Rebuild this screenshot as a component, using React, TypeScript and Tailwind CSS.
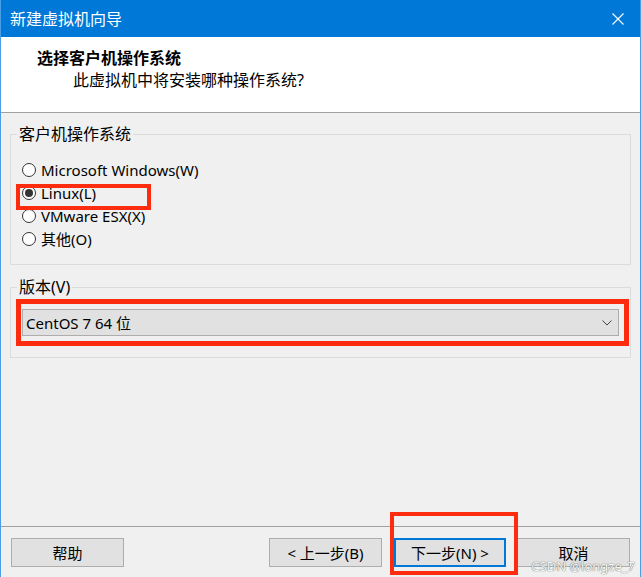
import React from 'react';

const font = "font-['Noto_Sans','Noto_Sans_CJK_SC',sans-serif]";

const Radio: React.FC<{ label: string; checked?: boolean }> = ({ label, checked }) => (
  <div className="flex items-center h-[23px]">
    <div className="shrink-0 flex items-center justify-center w-[14px] h-[14px] rounded-full border border-[#333333] bg-white">
      {checked && <div className="w-[8px] h-[8px] rounded-full bg-[#333333]" />}
    </div>
    <span className="ml-[5px] text-[15px] leading-[20px] text-black">{label}</span>
  </div>
);

const Button: React.FC<{ label: string; primary?: boolean; className?: string }> = ({ label, primary, className }) => (
  <div
    className={
      'flex items-center justify-center h-[29px] bg-[#e1e1e1] text-[15px] leading-[18px] text-black ' +
      (primary ? 'border-2 border-[#0078d7] ' : 'border border-[#adadad] ') +
      (className ?? '')
    }
  >
    {label}
  </div>
);

export default function App() {
  return (
    <div className={`relative w-[641px] h-[577px] flex flex-col bg-[#f0f0f0] border-x border-[#4a9ee6] ${font}`}>
      {/* title bar */}
      <div className="h-[37px] shrink-0 flex items-center bg-[#0078d7] pl-[9px] pr-[16px]">
        <span className="text-white text-[16px] leading-[20px]">新建虚拟机向导</span>
        <svg className="ml-auto" width="12" height="12" viewBox="0 0 12 12">
          <path d="M0.5 0.5 L11.5 11.5 M11.5 0.5 L0.5 11.5" stroke="white" strokeWidth="1.1" fill="none" />
        </svg>
      </div>

      {/* header */}
      <div className="h-[76px] shrink-0 bg-white border-b border-[#a0a0a0] pl-[36px] pt-[11px]">
        <div className="text-[16px] leading-[20px] font-bold text-black">选择客户机操作系统</div>
        <div className="ml-[36px] mt-[2px] text-[16px] leading-[20px] text-black">此虚拟机中将安装哪种操作系统?</div>
      </div>

      {/* body */}
      <div className="flex-1 px-[9px]">
        <fieldset className="mt-[11px] border border-[#dcdcdc]">
          <legend className="ml-[6px] px-[2px] text-[16px] leading-[20px] text-black">客户机操作系统</legend>
          <div className="pl-[11px] pt-[14px] pb-[14px]">
            <Radio label="Microsoft Windows(W)" />
            <Radio label="Linux(L)" checked />
            <Radio label="VMware ESX(X)" />
            <Radio label="其他(O)" />
          </div>
        </fieldset>

        <fieldset className="mt-[12px] border border-[#dcdcdc]">
          <legend className="ml-[6px] px-[2px] text-[16px] leading-[20px] text-black">版本(V)</legend>
          <div className="px-[11px] pt-[12px] pb-[21px]">
            <div className="h-[27px] flex items-center bg-[#e1e1e1] border border-[#adadad] pl-[3px] pr-[6px]">
              <span className="text-[15px] leading-[20px] text-black">CentOS 7 64 位</span>
              <svg className="ml-auto" width="10" height="6" viewBox="0 0 10 6">
                <path d="M0.5 0.5 L5 5 L9.5 0.5" stroke="#444444" strokeWidth="1" fill="none" />
              </svg>
            </div>
          </div>
        </fieldset>
      </div>

      {/* footer */}
      <div className="h-[51px] shrink-0 border-t border-[#a0a0a0] flex items-start pt-[11px] pl-[10px] pr-[10px]">
        <Button label="帮助" className="w-[113px]" />
        <Button label="< 上一步(B)" className="w-[113px] ml-auto" />
        <Button label="下一步(N) >" primary className="w-[112px] ml-[12px]" />
        <Button label="取消" className="w-[113px] ml-[11px]" />
      </div>

      {/* annotations */}
      <div className="absolute left-[15px] top-[184px] w-[135px] h-[26px] border-4 border-[#fe2c0e]" />
      <div className="absolute left-[15px] top-[299px] w-[613px] h-[47px] border-[5px] border-[#fe2c0e]" />
      <div className="absolute left-[389px] top-[512px] w-[128px] h-[63px] border-4 border-[#fe2c0e]" />

      <span className="absolute right-[5px] bottom-[5px] text-[13px] leading-[11px] text-[#f7f7f7] [text-shadow:0_0_1px_#707070,0_0_1px_#707070]">
        CSDN @longze_7
      </span>
    </div>
  );
}
